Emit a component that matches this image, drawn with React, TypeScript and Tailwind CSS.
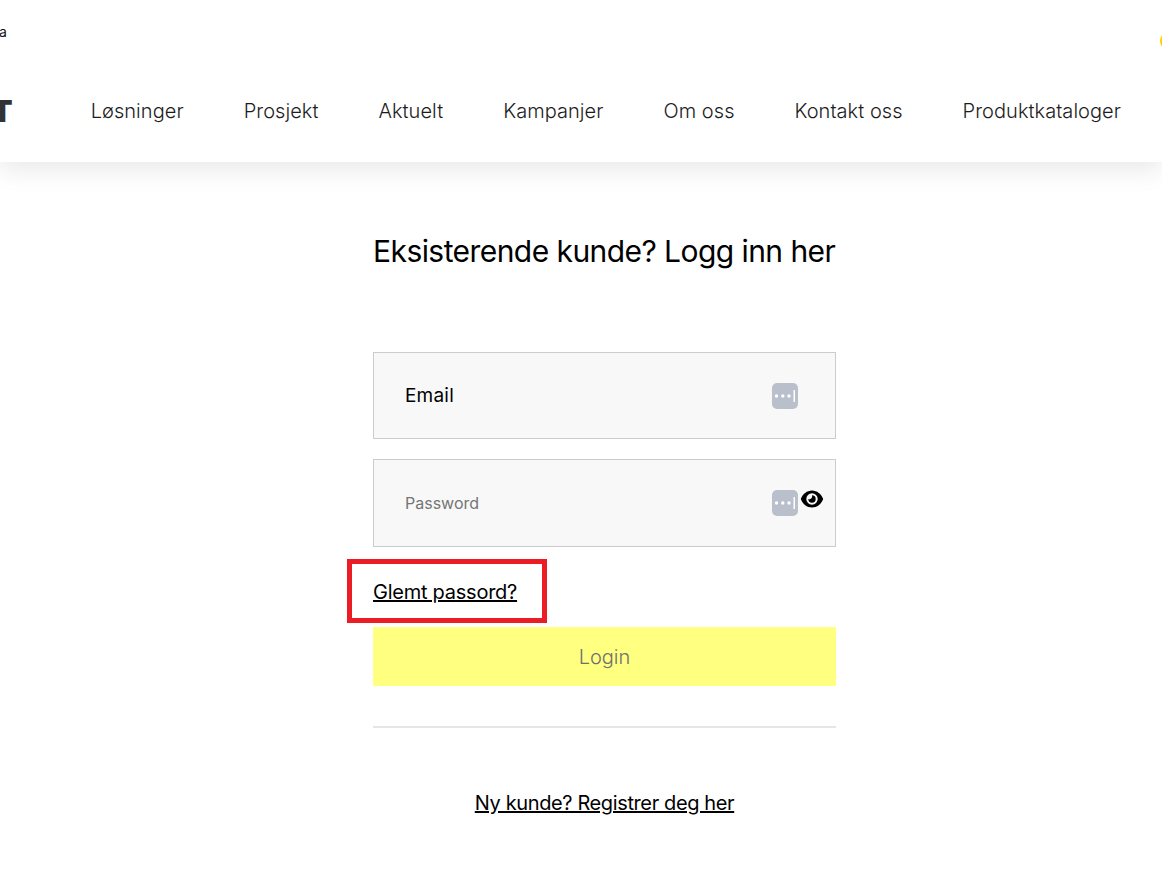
import React from "react";

const navItems = [
  "Løsninger",
  "Prosjekt",
  "Aktuelt",
  "Kampanjer",
  "Om oss",
  "Kontakt oss",
  "Produktkataloger",
];

function KeyIcon() {
  return (
    <svg width="26" height="26" viewBox="0 0 26 26" className="shrink-0">
      <rect width="26" height="26" rx="5" fill="#b9c0cc" />
      <circle cx="4.500" cy="13" r="1.700" fill="#fff" />
      <circle cx="10.800" cy="13" r="1.700" fill="#fff" />
      <circle cx="17" cy="13" r="1.700" fill="#fff" />
      <rect x="21.500" y="7" width="1.500" height="12" fill="#fff" />
    </svg>
  );
}

function EyeIcon() {
  return (
    <svg width="24" height="24" viewBox="0 0 24 24">
      <path
        fillRule="evenodd"
        d="M12 3.500C7 3.500 2.700 7 .8 12c1.900 5 6.200 8.500 11.200 8.500S21.300 17 23.200 12C21.300 7 17 3.500 12 3.500Zm0 2.800a5.700 5.700 0 1 1 0 11.400 5.700 5.700 0 0 1 0-11.400Z"
        fill="#000"
      />
      <path d="M12 8.300a3.700 3.700 0 1 1-3.700 3.700c1.600 1 4.500-.7 3.700-3.700Z" fill="#000" />
    </svg>
  );
}

function Field({
  label,
  placeholder,
  eye,
  height,
}: {
  label: string;
  placeholder?: boolean;
  eye?: boolean;
  height: string;
}) {
  return (
    <div className={`relative flex items-center justify-between border border-[#cccccc] bg-[#f8f8f8] pl-[31px] pr-[37px] ${height}`}>
      <span className={placeholder ? "text-[16px] text-[#757575]" : "mt-[2px] text-[19px] tracking-[0.2px] text-black"}>{label}</span>
      <KeyIcon />
      {eye && (
        <span className="absolute left-[426px] top-[27px]">
          <EyeIcon />
        </span>
      )}
    </div>
  );
}

export default function App() {
  return (
    <div className="relative h-[877px] w-[1162px] overflow-hidden bg-white font-['Inter','Noto_Sans',sans-serif] text-black">
      <header className="relative z-10 h-[162px] bg-white shadow-[0_8px_24px_rgba(0,0,0,0.09)]">
        <div className="flex h-[62px] items-center justify-between">
          <span className="-ml-[9px] text-[14px] text-[#111]">Ta</span>
          <span className="-mr-[16px] mt-[20px] h-[18px] w-[18px] rounded-full bg-[#fdd000]" />
        </div>
        <div className="flex h-[98px] items-center justify-between pr-[41px]">
          <span className="-ml-[8px] text-[30px] font-black leading-none text-[#333]">T</span>
          <nav className="flex gap-[60px] text-[20px] font-light tracking-[0.05px] text-[#1c1c1c]">
            {navItems.map((item) => (
              <a key={item}>{item}</a>
            ))}
          </nav>
        </div>
      </header>

      <main className="ml-[373px] w-[463px]">
        <h1 className="mt-[67px] whitespace-nowrap text-[30px] leading-[44px] tracking-[-0.56px]">
          Eksisterende kunde? Logg inn her
        </h1>
        <div className="mt-[79px] flex flex-col gap-5">
          <Field label="Email" height="h-[87px]" />
          <Field label="Password" placeholder eye height="h-[88px]" />
        </div>
        <a className="mt-[32px] block text-[20px] leading-[26px] tracking-[-0.25px] underline">Glemt passord?</a>
        <button className="mt-[22px] block h-[59px] w-full bg-[#ffff80] text-[20px] font-light text-[#6f6f6f]">Login</button>
        <hr className="mt-[40px] border-t-2 border-[#e6e6e6]" />
        <div className="mt-[60px] text-center">
          <a className="text-[20px] tracking-[-0.38px] underline">Ny kunde? Registrer deg her</a>
        </div>
      </main>

      {/* annotation drawn over the forgot password link */}
      <div className="absolute left-[347px] top-[559px] h-[64px] w-[200px] border-[5px] border-[#ec1c24]" />
    </div>
  );
}
